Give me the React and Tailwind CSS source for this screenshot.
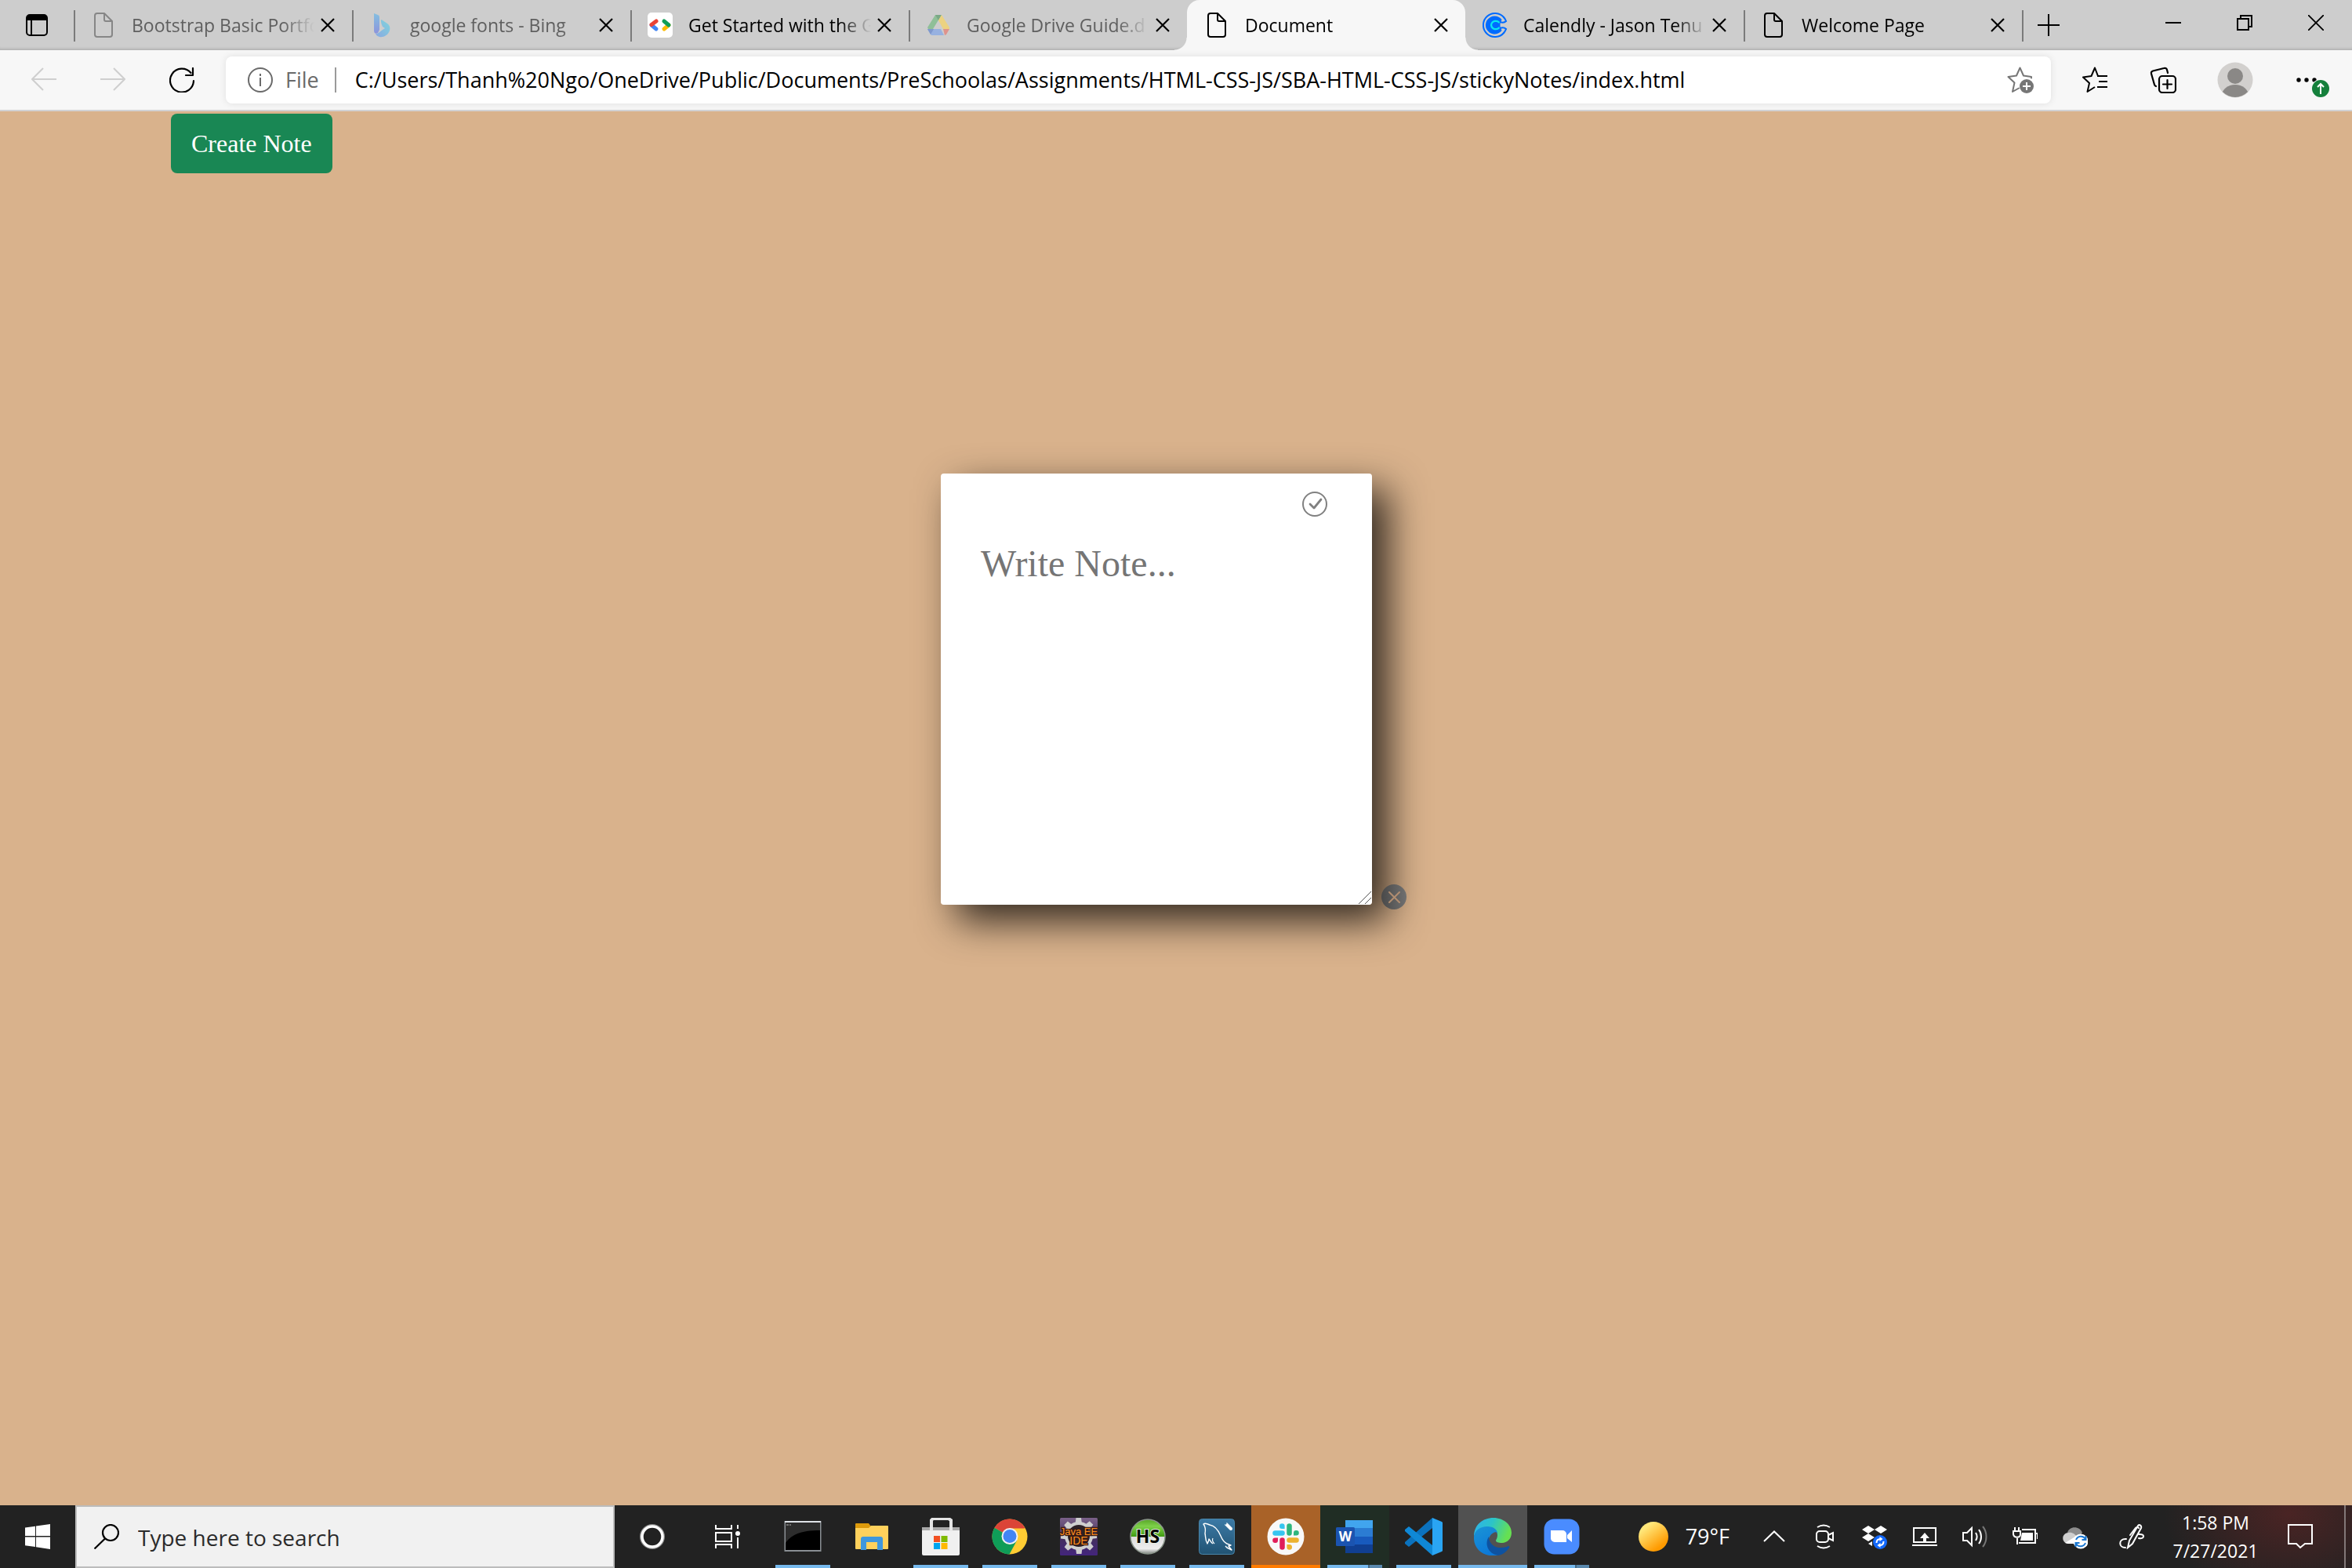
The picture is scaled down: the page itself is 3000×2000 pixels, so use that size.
import React from "react";

/* ---------- tab icons ---------- */

function PageIcon({ className = "" }) {
  return (
    <svg viewBox="0 0 32 32" className={"size-8 " + className} fill="none" stroke="currentColor" strokeWidth="2" strokeLinejoin="round">
      <path d="M8 1h9l10 10v17a3 3 0 0 1-3 3H8a3 3 0 0 1-3-3V4a3 3 0 0 1 3-3z" />
      <path d="M17 1v8a2 2 0 0 0 2 2h8" />
    </svg>
  );
}

function BingIcon() {
  return (
    <svg viewBox="0 0 32 32" className="size-8">
      <defs>
        <linearGradient id="bingA" x1="0" y1="0" x2="0" y2="1">
          <stop offset="0" stopColor="#84bfe0" />
          <stop offset="1" stopColor="#8c94dc" />
        </linearGradient>
        <linearGradient id="bingB" x1="1" y1="0" x2="0" y2="1">
          <stop offset="0" stopColor="#7fd4dc" />
          <stop offset="1" stopColor="#8aa9e2" />
        </linearGradient>
      </defs>
      <path d="M6 1l5 2a3 3 0 0 1 2 3v16l-2 4c-3 2-5 0-5-3z" fill="url(#bingA)" />
      <path d="M15 11c-1-2 1-2 2-1l6 4c3 2 4 5 3 9-2 6-8 9-13 8-3-1-4-2-5-4 3 0 5-2 9-5l3-2-3-2c-1-2-2-5-2-7z" fill="url(#bingB)" />
    </svg>
  );
}

function DevelopersIcon() {
  return (
    <svg viewBox="0 0 32 32" className="size-8" fill="none" strokeWidth="5" strokeLinecap="round">
      <rect width="32" height="32" rx="5" fill="#fff" />
      <path d="M5 16l6 5" stroke="#4285f4" />
      <path d="M5 15.500l6-4.500" stroke="#ea4335" />
      <path d="M21 21l6-5" stroke="#fbbc04" />
      <path d="M21 11l6 5" stroke="#0f9d58" />
    </svg>
  );
}

function DriveIcon() {
  return (
    <svg viewBox="0 0 32 32" className="size-8">
      <path d="M12 3h8l-11 18-6 0-1-2z" fill="#8fbf98" />
      <path d="M12 3h8l-4 7z" fill="#7ba886" />
      <path d="M20 3l10 16v2h-8L16 10z" fill="#ecd281" />
      <path d="M2 21h7l3 0h10l-3 0 4 8H8a3 3 0 0 1-2-1z" fill="#97b1e0" />
      <path d="M2 21h8l-4 7z" fill="#7f98cd" />
      <path d="M22 21h8l-4 7-2 1z" fill="#df938c" />
    </svg>
  );
}

function CalendlyIcon() {
  return (
    <svg viewBox="0 0 32 32" className="size-8" fill="none">
      <path d="M27.500 6.500A15 15 0 1 0 27.500 25.500" stroke="#006bff" strokeWidth="2" />
      <path d="M15.500 4.500a11.500 11.500 0 1 0 9 18.500l-2-5v-4l2-5a11.500 11.500 0 0 0-9-4.500z" fill="#006bff" />
      <path d="M21 12.500c-2-2.300-9-3-10 3.500 1 6.500 8 5.800 10 3.500" stroke="#0ae8f0" strokeWidth="2.200" strokeLinecap="round" />
      <path d="M22 12c3 1 6 1 8-1-1-2-1-3-3-5M22 20c3-1 6-1 8 1-1 2-1 3-3 5" stroke="#006bff" strokeWidth="2" />
    </svg>
  );
}

const TABS = [
  { title: "Bootstrap Basic Portfo", icon: <PageIcon className="text-[#868686]" />, dim: true, line: true },
  { title: "google fonts - Bing", icon: <BingIcon />, dim: true, line: true },
  { title: "Get Started with the G", icon: <DevelopersIcon />, line: true },
  { title: "Google Drive Guide.d", icon: <DriveIcon />, dim: true, line: true },
  { title: "Document", icon: <PageIcon />, active: true },
  { title: "Calendly - Jason Tenu", icon: <CalendlyIcon /> },
  { title: "Welcome Page", icon: <PageIcon />, line: true },
];

function Tab({ title, icon, dim, line, active }) {
  return (
    <div
      className={
        "relative flex w-[355px] items-center pr-[22px] pl-[22px] " +
        (active
          ? "rounded-t-2xl bg-[#f7f7f7] before:absolute before:bottom-0 before:-left-4 before:size-4 before:bg-[radial-gradient(circle_at_0_0,transparent_15px,#f7f7f7_16px)] after:absolute after:-right-4 after:bottom-0 after:size-4 after:bg-[radial-gradient(circle_at_100%_0,transparent_15px,#f7f7f7_16px)]"
          : "")
      }
    >
      {line && <span className="absolute top-[13px] left-0 h-10 w-0.5 bg-[#7b7b7b]" />}
      <button className="flex min-w-0 flex-1 items-center gap-5" aria-label={title}>
        <span className="shrink-0">{icon}</span>
        <span
          className={
            "min-w-0 flex-1 overflow-hidden text-left text-[23px] leading-8 whitespace-nowrap [mask-image:linear-gradient(to_right,black_calc(100%_-_40px),transparent)] " +
            (dim ? "text-[#5f5f5f]" : "text-black")
          }
        >
          {title}
        </span>
      </button>
      <button aria-label="Close tab" className="ml-2 shrink-0">
        <svg viewBox="0 0 18 18" className="size-[18px]" stroke="black" strokeWidth="2.200" fill="none">
          <path d="M1 1l16 16M17 1L1 17" />
        </svg>
      </button>
    </div>
  );
}

function TabStrip() {
  return (
    <div className="flex h-16 bg-[#cdcdcd] shadow-[inset_0_-5px_4px_-4px_rgba(0,0,0,0.2)]">
      <button aria-label="Tab actions" className="flex w-[94px] shrink-0 items-center justify-center">
        <svg viewBox="0 0 28 28" className="size-7">
          <rect x="1" y="1" width="26" height="26" rx="4" fill="none" stroke="black" strokeWidth="2" />
          <path d="M1 8V5a4 4 0 0 1 4-4h18a4 4 0 0 1 4 4v3z" />
          <path d="M7 8v19" stroke="black" strokeWidth="2" />
        </svg>
      </button>
      {TABS.map((t) => (
        <Tab key={t.title} {...t} />
      ))}
      <div className="relative flex items-center pl-5">
        <span className="absolute top-[13px] left-0 h-10 w-0.5 bg-[#7b7b7b]" />
        <button aria-label="New tab">
          <svg viewBox="0 0 28 28" className="size-7" stroke="black" strokeWidth="2">
            <path d="M14 0v28M0 14h28" />
          </svg>
        </button>
      </div>
      <div className="ml-auto flex items-center gap-[71px] pr-9 pb-1.5">
        <button aria-label="Minimize">
          <svg viewBox="0 0 20 20" className="size-5" stroke="black" strokeWidth="2">
            <path d="M0 10h20" />
          </svg>
        </button>
        <button aria-label="Restore">
          <svg viewBox="0 0 20 20" className="size-5" stroke="black" strokeWidth="2" fill="none">
            <path d="M1 5h14v14H1zM5 5V1h14v14h-4" />
          </svg>
        </button>
        <button aria-label="Close window">
          <svg viewBox="0 0 20 20" className="size-5" stroke="black" strokeWidth="1.800">
            <path d="M0 0l20 20M20 0L0 20" />
          </svg>
        </button>
      </div>
    </div>
  );
}

/* ---------- address row ---------- */

function Toolbar() {
  return (
    <div className="flex h-[78px] items-center border-b-2 border-[#d2d2d4] bg-[#f7f7f7]">
      <div className="flex gap-14 pr-10 pl-10">
        <button aria-label="Back" className="text-[#cfcfcf]">
          <svg viewBox="0 0 32 32" className="size-8" stroke="currentColor" strokeWidth="2" fill="none">
            <path d="M32 15H1M15 1L1 15l14 14" />
          </svg>
        </button>
        <button aria-label="Forward" className="text-[#cfcfcf]">
          <svg viewBox="0 0 32 32" className="size-8" stroke="currentColor" strokeWidth="2" fill="none">
            <path d="M0 15h31M17 1l14 14-14 14" />
          </svg>
        </button>
        <button aria-label="Refresh">
          <svg viewBox="0 0 32 32" className="size-8" stroke="black" strokeWidth="2.200" fill="none" strokeLinecap="round">
            <path d="M31 17A15 15 0 1 1 27.500 7" />
            <path d="M30 1v9h-9" strokeLinejoin="round" />
          </svg>
        </button>
      </div>
      <div className="flex h-15 min-w-0 flex-1 items-center rounded-lg bg-white pr-[22px] pl-7 shadow-[0_0_10px_rgba(0,0,0,0.1)]">
        <svg viewBox="0 0 32 32" className="size-8 shrink-0" stroke="#6a6a6a" strokeWidth="2" fill="none">
          <circle cx="16" cy="16" r="15" />
          <path d="M16 13v11M16 8v3" />
        </svg>
        <label htmlFor="address" className="ml-4 text-[27px] leading-9 text-[#6a6a6a]">
          File
        </label>
        <span className="ml-5 h-8 w-0.5 bg-[#9a9a9a]" />
        <input
          id="address"
          type="text"
          className="ml-6 min-w-0 flex-1 text-[27px] leading-9 text-black outline-none"
          defaultValue="C:/Users/Thanh%20Ngo/OneDrive/Public/Documents/PreSchoolas/Assignments/HTML-CSS-JS/SBA-HTML-CSS-JS/stickyNotes/index.html"
        />
        <button aria-label="Add to favorites">
          <svg viewBox="0 0 34 34" className="size-[34px]" fill="none">
            <path
              d="M31 14.500v-1.500l-10-1.500L16.500 1.500 12 11.500 1.500 13l8 7.500L7 32l8-4.500"
              stroke="#767676"
              strokeWidth="2"
              strokeLinejoin="round"
              strokeLinecap="round"
            />
            <circle cx="25" cy="25" r="9" fill="#767676" />
            <path d="M25 20v10M20 25h10" stroke="white" strokeWidth="2" />
          </svg>
        </button>
      </div>
      <div className="flex items-center pr-7 pl-10">
        <button aria-label="Favorites">
          <svg viewBox="0 0 32 34" className="h-[34px] w-8" fill="none" stroke="black" strokeWidth="2" strokeLinejoin="round">
            <path d="M20 12l-4-10.500L11.500 12 1 13.500l8 7.500L6.500 32l9.500-6" />
            <path d="M19 12h13M21 19h11M19 26h13" />
          </svg>
        </button>
        <button aria-label="Collections" className="ml-[54px]">
          <svg viewBox="0 0 34 34" className="size-[34px]" fill="none" stroke="black" strokeWidth="2.200" strokeLinecap="round">
            <rect x="12" y="12" width="21" height="21" rx="4" />
            <path d="M22.500 17v11M17 22.500h11M23 8l-1-4a3 3 0 0 0-4-2L4 5.500A3 3 0 0 0 2 9l4 14a3 3 0 0 0 2 2" />
          </svg>
        </button>
        <button aria-label="Profile" className="ml-[52px]">
          <svg viewBox="0 0 46 46" className="size-[46px]">
            <defs>
              <clipPath id="avatarClip">
                <circle cx="23" cy="23" r="22" />
              </clipPath>
            </defs>
            <circle cx="23" cy="23" r="22.500" fill="#d2d0ce" />
            <g clipPath="url(#avatarClip)" fill="#8a8886">
              <circle cx="23" cy="18" r="10" />
              <ellipse cx="23" cy="43" rx="17" ry="14" />
            </g>
          </svg>
        </button>
        <button aria-label="Settings and more" className="ml-[54px]">
          <svg viewBox="0 0 44 46" className="h-[46px] w-11">
            <circle cx="4" cy="23" r="2.700" />
            <circle cx="14" cy="23" r="2.700" />
            <circle cx="24" cy="23" r="2.700" />
            <circle cx="32" cy="34" r="12" fill="#f7f7f7" />
            <circle cx="32" cy="34" r="11" fill="#15803c" />
            <path d="M32 41V28M28 32l4-4 4 4" stroke="white" strokeWidth="2" fill="none" />
          </svg>
        </button>
      </div>
    </div>
  );
}

/* ---------- page ---------- */

function NotesPage() {
  return (
    <main className="flex-1 bg-[#d9b28c] font-['Liberation_Serif','Times_New_Roman',serif]">
      <div className="px-[218px] pt-[3px]">
        <button className="rounded-lg bg-[#198754] px-[26px] py-4 text-[32px] leading-11 text-white">Create Note</button>
      </div>
      <div className="mt-[383px] flex items-end justify-center gap-3 pr-1.5">
        <div className="relative rounded shadow-[20px_20px_50px_rgba(0,0,0,0.78)]">
          <textarea
            aria-label="Note"
            placeholder="Write Note..."
            className="block size-[550px] resize-none rounded bg-white px-[51px] pt-[87px] text-[48px] leading-14 text-black outline-none placeholder:text-[#757575]"
          />
          <button aria-label="Save note" className="absolute top-[23px] right-[57px]">
            <svg viewBox="0 0 32 32" className="size-8" fill="none" stroke="#808080">
              <circle cx="16" cy="16" r="15" strokeWidth="2" />
              <path d="M10 16l5 5 9-11" strokeWidth="2.800" strokeLinecap="round" strokeLinejoin="round" />
            </svg>
          </button>
          <svg viewBox="0 0 18 18" className="absolute right-0 bottom-0 size-[18px]" stroke="#555" strokeWidth="1">
            <path d="M1 17L17 1M9 17l8-8" />
          </svg>
        </div>
        <button aria-label="Delete note" className="relative -mb-1.5">
          <svg viewBox="0 0 32 32" className="size-8" fill="none">
            <defs>
              <linearGradient id="del" x1="0" y1="0" x2="1" y2="0">
                <stop offset="0" stopColor="#494949" />
                <stop offset="1" stopColor="#707070" />
              </linearGradient>
            </defs>
            <circle cx="16" cy="16" r="16" fill="url(#del)" />
            <path d="M10 10l13 13M23 10L10 23" stroke="#b08d70" strokeWidth="2" strokeLinecap="round" />
          </svg>
        </button>
      </div>
    </main>
  );
}

/* ---------- taskbar app icons, each on a 48 x 48 grid ---------- */

function Icon48({ children }) {
  return (
    <svg viewBox="0 0 48 48" className="size-12">
      {children}
    </svg>
  );
}

const TEETH = [0, 45, 90, 135, 180, 225, 270, 315];

const APPS = [
  {
    name: "Command Prompt",
    state: "open",
    icon: (
      <Icon48>
        <rect x="0.500" y="4" width="47" height="39" fill="#8a8f94" />
        <rect x="1" y="4" width="46" height="2" fill="#dfe3e8" />
        <rect x="2" y="6" width="44" height="35" fill="#000" />
        <path d="M2 6h44v10C24 16 10 20 2 32z" fill="#2d2d2d" />
        <path d="M3 9h3M7 9h2" stroke="#888" strokeWidth="1.500" />
      </Icon48>
    ),
  },
  {
    name: "File Explorer",
    icon: (
      <Icon48>
        <path d="M3 8a1 1 0 0 1 1-1h16l3 4v4H3z" fill="#dd9a0b" />
        <path d="M3 13h17l3-3h21a1 1 0 0 1 1 1v28a1 1 0 0 1-1 1H4a1 1 0 0 1-1-1z" fill="#ffd15c" />
        <path d="M10 41V27a3 3 0 0 1 3-3h22a3 3 0 0 1 3 3v14h-7V31H17v10z" fill="#3f97dd" />
      </Icon48>
    ),
  },
  {
    name: "Microsoft Store",
    state: "open",
    icon: (
      <Icon48>
        <path d="M12 16V3l2-2h20l3 2v13" fill="none" stroke="#e4e4e4" strokeWidth="4" />
        <path d="M0 12h48v5H0z" fill="#a9a9a9" />
        <path d="M0 16h48v30a2 2 0 0 1-2 2H2a2 2 0 0 1-2-2z" fill="#f0f0f0" />
        <path d="M10 12h4v5h-4zM35 12h4v5h-4z" fill="#e8e8e8" />
        <path d="M15 23h8v8h-8z" fill="#f25022" />
        <path d="M24.500 23h8v8h-8z" fill="#7fba00" />
        <path d="M15 32h8v8h-8z" fill="#00a4ef" />
        <path d="M24.500 32h8v8h-8z" fill="#ffb900" />
      </Icon48>
    ),
  },
  {
    name: "Google Chrome",
    state: "open",
    icon: (
      <Icon48>
        <circle cx="24" cy="24" r="22.500" fill="#fc3" />
        <path d="M24 24L4.500 12.700A22.500 22.500 0 0 1 43.500 13z" fill="#db4437" />
        <path d="M43.500 13H24v6z" fill="#db4437" />
        <path d="M4.500 12.700A22.500 22.500 0 0 0 23.500 46.500L33 29l-9-5z" fill="#0f9d58" />
        <path d="M24 13.500h19.500L33 29z" fill="#fc3" />
        <circle cx="24" cy="23.500" r="10.500" fill="#f1f1f1" />
        <circle cx="24" cy="23.500" r="8.500" fill="#4285f4" />
      </Icon48>
    ),
  },
  {
    name: "Eclipse Java EE IDE",
    state: "open",
    icon: (
      <Icon48>
        <defs>
          <linearGradient id="javaBg" x1="0" y1="0" x2="0" y2="1">
            <stop offset="0" stopColor="#7b6189" />
            <stop offset="0.500" stopColor="#44305c" />
            <stop offset="1" stopColor="#43257c" />
          </linearGradient>
        </defs>
        <rect width="48" height="48" rx="1.500" fill="url(#javaBg)" />
        <g fill="#cfcfcf">
          {TEETH.map((a) => (
            <path key={a} d="M20.500 0h6.500l1 8h-8.500z" transform={`rotate(${a} 24 23)`} />
          ))}
        </g>
        <circle cx="24" cy="23" r="16" fill="#2b2026" stroke="#cfcfcf" strokeWidth="4" />
        <g
          fill="#ff9020"
          stroke="#3a1c14"
          strokeWidth="2.500"
          paintOrder="stroke"
          fontFamily="Liberation Sans, sans-serif"
          textAnchor="middle"
        >
          <text x="24" y="22" fontSize="13">Java EE</text>
          <text x="24" y="34" fontSize="14">IDE</text>
        </g>
      </Icon48>
    ),
  },
  {
    name: "HeidiSQL",
    state: "open",
    icon: (
      <Icon48>
        <defs>
          <linearGradient id="hs" x1="0" y1="0" x2="0" y2="1">
            <stop offset="0" stopColor="#57a526" />
            <stop offset="0.200" stopColor="#7ed04a" />
            <stop offset="0.500" stopColor="#3f9a10" />
            <stop offset="0.510" stopColor="#dcdcdc" />
            <stop offset="0.850" stopColor="#eeeeee" />
            <stop offset="1" stopColor="#7f857f" />
          </linearGradient>
        </defs>
        <circle cx="24" cy="24" r="22" fill="url(#hs)" stroke="#8b968b" strokeWidth="1.500" />
        <text
          x="24"
          y="32"
          fontSize="23"
          fontWeight="700"
          textAnchor="middle"
          fontFamily="Open Sans, sans-serif"
          stroke="#e9efe4"
          strokeWidth="2"
          paintOrder="stroke"
        >
          HS
        </text>
      </Icon48>
    ),
  },
  {
    name: "MySQL Workbench",
    state: "open",
    icon: (
      <Icon48>
        <defs>
          <linearGradient id="my" x1="0" y1="0" x2="0" y2="1">
            <stop offset="0" stopColor="#3c7aa6" />
            <stop offset="1" stopColor="#215373" />
          </linearGradient>
        </defs>
        <rect x="1.500" y="1.500" width="45" height="45" rx="4" fill="url(#my)" stroke="#4a86aa" strokeWidth="1" />
        <path
          d="M19 33c-3-2-4-5-5-6 0 2-1 4-2 6-3-5-2-9-3-13C10 15 10 12 7 8c2-2 6 0 8 1 7 1 11 7 14 14 2 5 4 8 8 10l5 2-3 1 4 5-6-3-2-2"
          fill="none"
          stroke="#fff"
          strokeWidth="1.400"
          strokeLinejoin="round"
        />
        <path d="M19 26c-1 2 0 5 2 7" fill="none" stroke="#fff" strokeWidth="1.200" />
        <path d="M36 8l6 6" stroke="#fff" strokeWidth="4" strokeLinecap="round" />
        <path d="M32 4l4 4" stroke="#3a76a0" strokeWidth="2.500" fill="none" />
      </Icon48>
    ),
  },
  {
    name: "Slack",
    state: "alert",
    icon: (
      <Icon48>
        <circle cx="24" cy="24" r="23.500" fill="#f8f8f8" />
        <g strokeWidth="6.500" strokeLinecap="round">
          <path d="M10.500 19.500h9" stroke="#36c5f0" />
          <path d="M28.500 10.500v9" stroke="#2eb67d" />
          <path d="M28.500 28.500h9" stroke="#ecb22e" />
          <path d="M19.500 28.500v9" stroke="#e01e5a" />
        </g>
        <path d="M16 10.500a3.300 3.300 0 0 1 6.600 0v3.500h-3.300a3.300 3.300 0 0 1-3.300-3.500z" fill="#36c5f0" />
        <path d="M37.500 16a3.300 3.300 0 0 1 0 6.600h-3.500v-3.300a3.300 3.300 0 0 1 3.500-3.300z" fill="#2eb67d" />
        <path d="M32 37.500a3.300 3.300 0 0 1-6.600 0v-3.500h3.300a3.300 3.300 0 0 1 3.300 3.500z" fill="#ecb22e" />
        <path d="M10.500 32a3.300 3.300 0 0 1 0-6.600h3.500v3.300a3.300 3.300 0 0 1-3.500 3.300z" fill="#e01e5a" />
      </Icon48>
    ),
  },
  {
    name: "Word",
    state: "stacked",
    tint: true,
    icon: (
      <Icon48>
        <path d="M12 3h35v11H12z" fill="#41a5ee" />
        <path d="M12 13h35v11H12z" fill="#2b7cd3" />
        <path d="M12 24h35v11H12z" fill="#185abd" />
        <path d="M12 34h35v11H12z" fill="#103f91" />
        <rect x="0" y="12" width="24" height="24" rx="1.500" fill="#1b54b0" />
        <text x="12" y="30" fontSize="17" fontWeight="700" textAnchor="middle" fill="white" fontFamily="Open Sans, sans-serif">
          W
        </text>
      </Icon48>
    ),
  },
  {
    name: "Visual Studio Code",
    state: "open",
    icon: (
      <Icon48>
        <path d="M35 0v13L5 37 0 33v-2z" fill="#0b72bd" />
        <path d="M35 48V35L5 11l-5 4v2z" fill="#0f88d6" />
        <path d="M35 0l12 5a2 2 0 0 1 1 2v34a2 2 0 0 1-1 2l-12 5z" fill="#2aa5f3" />
      </Icon48>
    ),
  },
  {
    name: "Microsoft Edge",
    state: "active",
    icon: (
      <Icon48>
        <defs>
          <linearGradient id="edgeTop" x1="0" y1="0" x2="1" y2="0.300">
            <stop offset="0" stopColor="#2fb0ee" />
            <stop offset="0.500" stopColor="#2cc4c8" />
            <stop offset="1" stopColor="#66e052" />
          </linearGradient>
          <linearGradient id="edgeMid" x1="0" y1="0" x2="0.500" y2="1">
            <stop offset="0" stopColor="#1a94d6" />
            <stop offset="1" stopColor="#0d79d8" />
          </linearGradient>
        </defs>
        <path d="M0 24C0 9 11 0 25 0c13 0 23 9 23 19 0 8-6 13-12 13-5 0-8-1-8-3 0-1 2-3 2-7 0-6-5-10-12-10C9 12 2 17 0 24z" fill="url(#edgeTop)" />
        <path d="M0 24c1-8 8-13 17-13 8 0 13 4 13 9-1-2-3-2-5-1-6 3-8 11-5 18 2 5 6 8 11 11C13 51-1 40 0 24z" fill="url(#edgeMid)" />
        <path d="M19 24c-6 9-1 22 12 24 6-1 11-5 14-10 1-1 0-2-1-2-4 2-8 2-12 2-8-1-13-7-13-14z" fill="#0e52a0" />
      </Icon48>
    ),
  },
  {
    name: "Zoom",
    state: "stacked",
    icon: (
      <Icon48>
        <rect x="1.500" y="1.500" width="45" height="45" rx="13" fill="#4a8cff" />
        <path d="M10 16h15a5 5 0 0 1 5 5v10H15a5 5 0 0 1-5-5zM31 22l6-6v15l-6-5z" fill="#fff" />
      </Icon48>
    ),
  },
];

function TaskbarApp({ name, icon, state, tint }) {
  const bg =
    state === "alert" ? "bg-[#a96228]" : state === "active" ? "bg-[#515151]" : tint ? "bg-[#202d24]" : "";
  return (
    <button aria-label={name} className={"relative flex w-[88px] shrink-0 items-center justify-center " + bg}>
      {icon}
      {state === "open" && <span className="absolute bottom-0 left-[9px] h-1 w-[70px] bg-[#76b9ed]" />}
      {state === "alert" && <span className="absolute bottom-0 left-0 h-1 w-full bg-[#ff7b00]" />}
      {state === "active" && <span className="absolute bottom-0 left-0 h-1 w-full bg-[#76b9ed]" />}
      {state === "stacked" && (
        <span className="absolute bottom-0 left-[9px] flex h-1 w-[70px] bg-[#5a89ae]">
          <span className="w-[52px] bg-[#76b9ed]" />
          <span className="w-0.5 bg-[#466984]" />
        </span>
      )}
    </button>
  );
}

/* ---------- notification area ---------- */

function TrayIcon({ label, children }) {
  return (
    <button aria-label={label} className="flex w-16 shrink-0 items-center justify-center">
      <svg viewBox="0 0 32 32" className="size-8" fill="none" stroke="white" strokeWidth="2">
        {children}
      </svg>
    </button>
  );
}

function Tray() {
  return (
    <div className="ml-auto flex shrink-0 text-white">
      <button className="flex items-center gap-[22px] pr-[25px] text-[27px] leading-9">
        <svg viewBox="0 0 38 38" className="size-[38px]">
          <defs>
            <linearGradient id="sun" x1="0.200" y1="0.100" x2="0.800" y2="0.900">
              <stop offset="0.100" stopColor="#ffe77a" />
              <stop offset="0.900" stopColor="#ff9a00" />
            </linearGradient>
          </defs>
          <circle cx="19" cy="19" r="19" fill="url(#sun)" />
        </svg>
        79°F
      </button>
      <TrayIcon label="Show hidden icons">
        <path d="M3 22L16 9.500 29 22" />
      </TrayIcon>
      <TrayIcon label="Meet Now">
        <rect x="6" y="9" width="15" height="14" rx="4" />
        <path d="M21 14l6-3v10l-6-3M7 4c5-3 11-3 16 0M7 28c5 3 11 3 16 0" />
      </TrayIcon>
      <TrayIcon label="Dropbox">
        <g fill="#fff" stroke="none">
          <path d="M8 2l8 5-8 5-8-5zM24 2l8 5-8 5-8-5zM8 12l8 5-8 5-8-5zM8 25l5-3v6z" />
        </g>
        <circle cx="23" cy="23" r="9" fill="#1268fb" stroke="none" />
        <path d="M18.500 24c0-3 2-5 5-5M27.500 22c0 3-2 5-5 5" />
        <path d="M22.500 16l4 3-4 3zM23.500 24l-4 3 4 3z" fill="#fff" stroke="none" />
      </TrayIcon>
      <TrayIcon label="Project">
        <path d="M2 5h28v18H2zM0 27h32" />
        <path d="M10 18l6-7 6 7z" fill="#fff" stroke="none" />
        <path d="M16 22v-6" strokeWidth="4" />
      </TrayIcon>
      <TrayIcon label="Volume">
        <path d="M1 11h5l6-6v22l-6-6H1zM17 11c2 3 2 7 0 10M21 7c4 5 4 13 0 18" />
        <path d="M26 3c6 7 6 19 0 26" stroke="#777" />
      </TrayIcon>
      <TrayIcon label="Battery">
        <path d="M12 7h17v17H8M30 12h2v7M6 18v8M3 4v5M8 4v5" />
        <path d="M1 9h9v4c0 5-8 5-9 0z" />
        <path d="M12 11h14v10H10z" fill="#fff" stroke="none" />
      </TrayIcon>
      <TrayIcon label="OneDrive">
        <path d="M6 11c2-9 16-9 19 0l-5 6z" fill="#8d8d8d" stroke="none" />
        <path d="M7 25c-9-1-9-13 0-14 5-1 9 2 11 5l-6 9z" fill="#cfcfcf" stroke="none" />
        <path d="M3 24l13-8 4 3-4 6H7z" fill="#fff" stroke="none" />
        <circle cx="23" cy="22" r="9.500" fill="#fff" stroke="none" />
        <path d="M17 20c2-5 9-6 12-1M29 24c-2 5-9 6-12 1M29.500 15v5h-5M16.500 29v-5h5" stroke="#1876d1" />
      </TrayIcon>
      <button aria-label="Windows Ink Workspace" className="flex w-20 shrink-0 items-center justify-center">
        <svg viewBox="0 0 32 32" className="size-8" fill="none" stroke="white" strokeWidth="2" strokeLinecap="round">
          <path d="M11 30l2-9L24 2c2-2 5 0 4 3L17 25zM14 14l7-9c2-2 3-1 4 0" />
          <path d="M8 30c-9 0-9-11 0-11h1M25 13c9-1 7 7 0 5" />
        </svg>
      </button>
      <button className="flex w-[134px] shrink-0 flex-col items-center justify-center text-center text-[23px] leading-9">
        <span>1:58 PM</span>
        <span>7/27/2021</span>
      </button>
      <button aria-label="Notifications" className="flex w-[97px] items-center justify-end pr-10">
        <svg viewBox="0 0 32 32" className="size-8" fill="none" stroke="white" strokeWidth="2">
          <path d="M1 1h30v24h-9l-6 5-5-5H1z" />
        </svg>
      </button>
      <button aria-label="Show desktop" className="mr-2 w-0.5 bg-[#827878]" />
    </div>
  );
}

function Taskbar() {
  return (
    <footer className="flex h-20 bg-[#222222] bg-[radial-gradient(ellipse_160px_110px_at_calc(100%_-_80px)_10px,#4a2424,#222222)]">
      <button aria-label="Start" className="flex w-24 shrink-0 items-center justify-center">
        <svg viewBox="0 0 32 32" className="size-8" fill="white">
          <path d="M0 4.500L13 2.700V15H0zM14 2.500L32 0v15H14zM0 16.500h13V29L0 27.300zM14 16.500h18V32L14 29.300z" />
        </svg>
      </button>
      <label className="flex w-[688px] items-center gap-6 border-2 border-[#bcbcbc] bg-[#f1f1f1] pl-[22px]">
        <svg viewBox="0 0 32 32" className="size-8 shrink-0" fill="none" stroke="black" strokeWidth="2.200">
          <circle cx="21" cy="11" r="10" />
          <path d="M14 18.500L0.500 31.500" />
        </svg>
        <input
          type="text"
          aria-label="Search"
          placeholder="Type here to search"
          className="min-w-0 flex-1 pt-0.5 text-[28px] leading-10 outline-none placeholder:text-[#2b2b2b]"
        />
      </label>
      <button aria-label="Cortana" className="flex w-24 shrink-0 items-center justify-center">
        <svg viewBox="0 0 32 32" className="size-8" fill="none">
          <circle cx="16" cy="16" r="14.500" stroke="#8a8a8a" strokeWidth="3" />
          <circle cx="16" cy="16" r="13" stroke="white" strokeWidth="3.500" />
        </svg>
      </button>
      <button aria-label="Task View" className="mr-1 flex w-24 shrink-0 items-center justify-center">
        <svg viewBox="0 0 32 32" className="size-8" fill="none" stroke="white" strokeWidth="2">
          <path d="M1 1v5h20V1M1 11h20v11H1zM1 31v-5h20v5M29 1v5M29 17v14" />
          <circle cx="29" cy="12" r="3" fill="white" stroke="none" />
        </svg>
      </button>
      {APPS.map((a) => (
        <TaskbarApp key={a.name} {...a} />
      ))}
      <Tray />
    </footer>
  );
}

export default function App() {
  return (
    <div className="flex min-h-screen flex-col font-['Open_Sans','Segoe_UI',sans-serif]">
      <header>
        <TabStrip />
        <Toolbar />
      </header>
      <NotesPage />
      <Taskbar />
    </div>
  );
}
